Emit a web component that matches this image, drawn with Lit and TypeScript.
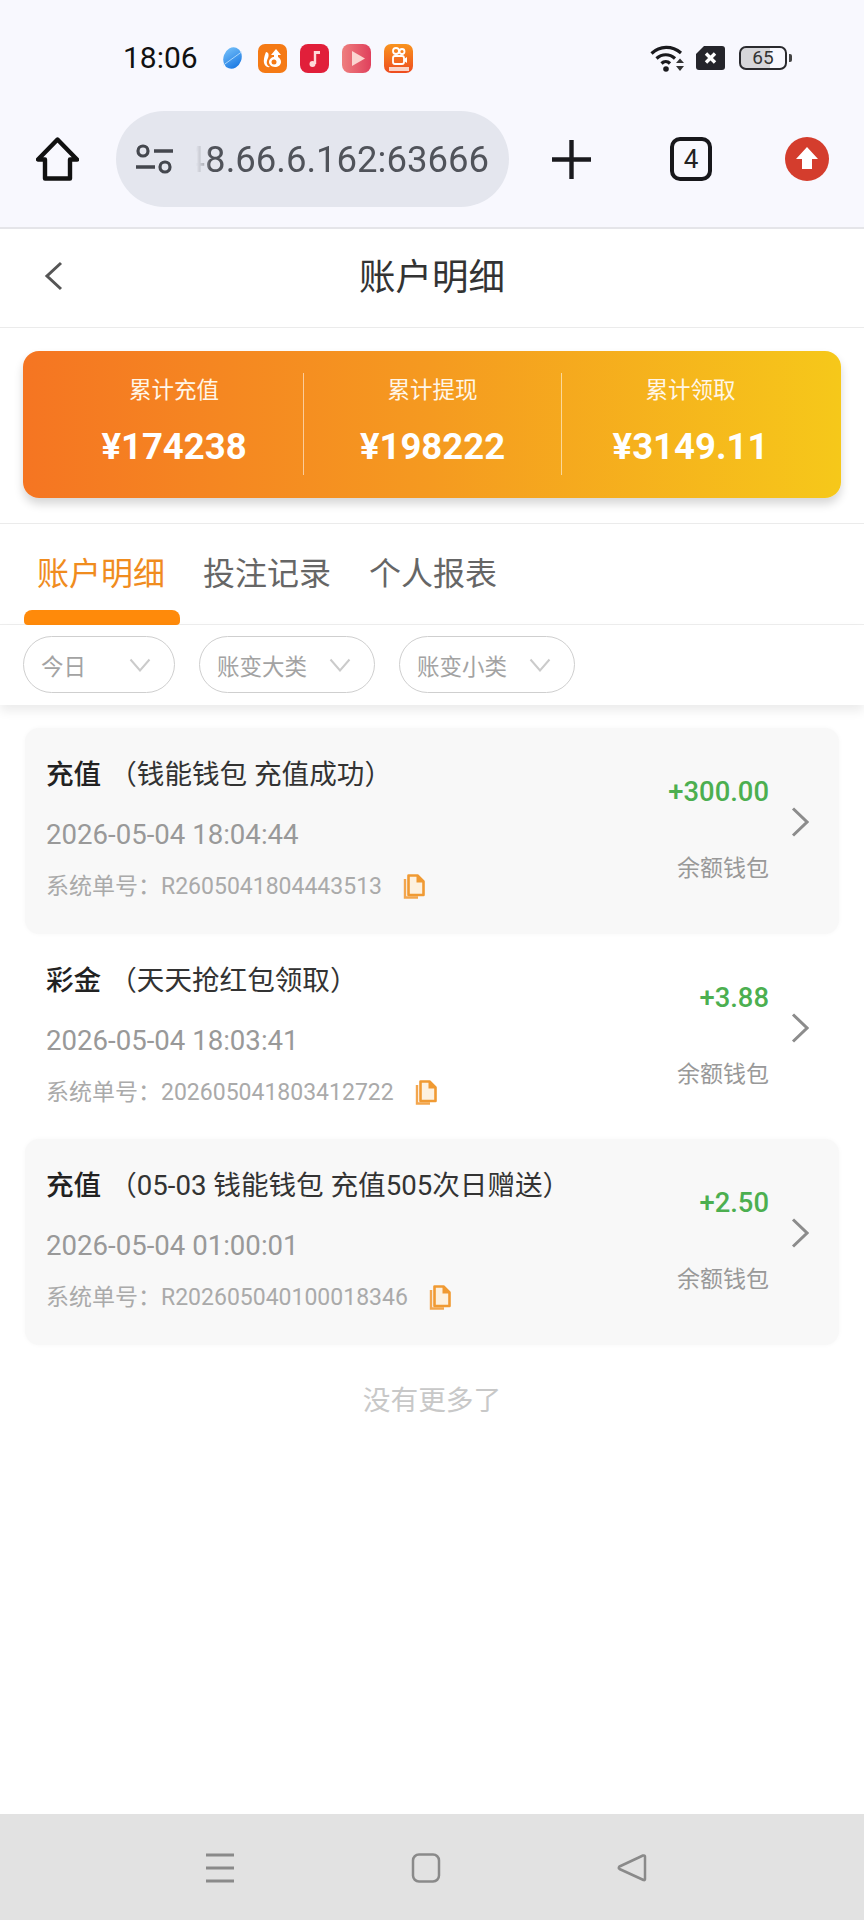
import { LitElement, html, css, svg } from "lit";
import { customElement } from "lit/decorators.js";

const rows = [
  { kind: "充值", note: "（钱能钱包 充值成功）", date: "2026-05-04 18:04:44", no: "R2605041804443513", amt: "+300.00", shaded: true },
  { kind: "彩金", note: "（天天抢红包领取）", date: "2026-05-04 18:03:41", no: "202605041803412722", amt: "+3.88", shaded: false },
  { kind: "充值", note: "（05-03 钱能钱包 充值505次日赠送）", date: "2026-05-04 01:00:01", no: "R202605040100018346", amt: "+2.50", shaded: true },
];

const copyIcon = svg`<svg class="copy" viewBox="0 0 22 26" width="22" height="26">
  <path d="M2 5v18.500h13" fill="none" stroke="#f3a64e" stroke-width="2.400"/>
  <path d="M5.500 1.500h9l6 6v13.500h-15z" fill="#fdf1e0" stroke="#f09a33" stroke-width="2.600" stroke-linejoin="round"/>
  <path d="M13.500 1.500l7 7h-7z" fill="#f09a33"/>
</svg>`;

const chevronDown = svg`<svg viewBox="0 0 22 14" width="22" height="14"><path d="M1.500 1.500L11 12.500 20.500 1.500" fill="none" stroke="#cbcbcb" stroke-width="2"/></svg>`;

@customElement("app-root")
export class AppRoot extends LitElement {
  static styles = css`
    :host { display: block; width: 864px; min-height: 1920px; background: #fff; font-family: Roboto, "Noto Sans CJK SC", sans-serif; }
    * { box-sizing: border-box; }
    .page { display: flex; flex-direction: column; height: 1920px; }
    .browser { background: #f8f8fe; height: 229px; border-bottom: 2px solid #e5e5e9; flex: none; }
    .status { height: 111px; padding: 3px 77px 0 123px; display: flex; align-items: center; }
    .time { font-size: 30px; color: #111; width: 97px; }
    .notif { display: flex; align-items: center; gap: 13px; margin-top: 2px; }
    .notif svg { display: block; }
    .sys { margin-left: auto; display: flex; align-items: center; gap: 10px; margin-top: 2px; }
    .sys svg { display: block; }
    .battery { width: 48px; height: 24px; border: 2.5px solid #2a2a2e; border-radius: 7px; position: relative; font-size: 19px; line-height: 19px; text-align: center; color: #333; background: linear-gradient(90deg, #d6d6da 65%, transparent 65%); margin-left: 4px; }
    .battery::after { content: ""; position: absolute; right: -7px; top: 6px; width: 3px; height: 8px; background: #444; border-radius: 0 2px 2px 0; }
    .toolbar { height: 96px; display: flex; align-items: center; padding-left: 36px; }
    .toolbar svg { display: block; flex: none; }
    .pill { margin-left: 37px; width: 393px; height: 96px; border-radius: 48px; background: #e4e6ee; display: flex; align-items: center; padding-left: 20px; flex: none; overflow: hidden; }
    .url { width: 293px; margin-left: 23px; font-size: 36.500px; color: #50535a; white-space: nowrap; overflow: hidden; display: flex; justify-content: flex-end; -webkit-mask-image: linear-gradient(90deg, transparent 0, rgba(0,0,0,.35) 8px, #000 14px); mask-image: linear-gradient(90deg, transparent 0, rgba(0,0,0,.35) 8px, #000 14px); }
    .url span { flex: none; }
    .plus { margin-left: 43px; }
    .tabcount { margin-left: 79px; width: 42px; height: 44px; border: 4px solid #17171b; border-radius: 10px; display: flex; align-items: center; justify-content: center; font-size: 26px; font-weight: 400; color: #222; flex: none; }
    .up { margin-left: 73px; }
    .head { height: 99px; flex: none; border-bottom: 1px solid #ebebeb; display: flex; align-items: center; justify-content: center; padding-bottom: 8px; position: relative; }
    .head h1 { margin: 0; font-size: 36.500px; font-weight: 400; color: #333; }
    .back { position: absolute; left: 44px; top: 32px; display: block; }
    .summary { height: 196px; flex: none; padding: 23px 23px 0; border-bottom: 1px solid #ebebeb; }
    .card { height: 147px; border-radius: 16px; background: linear-gradient(90deg, #f57522 0%, #f59a20 50%, #f6c81a 100%); box-shadow: 0 6px 10px rgba(0,0,0,.16); display: grid; grid-template-columns: repeat(3, 1fr); padding: 22px; color: #fff; }
    .cell { display: flex; flex-direction: column; align-items: center; border-left: 1px solid rgba(255,255,255,.55); height: 102px; }
    .cell:first-child { border-left: none; }
    .cell .l { font-size: 22.500px; line-height: 34px; color: #fff6e8; }
    .cell .v { font-size: 36.500px; font-weight: 700; line-height: 40px; margin-top: 20px; }
    .tabs { height: 101px; flex: none; display: flex; align-items: flex-start; gap: 38px; padding: 29px 0 0 37px; border-bottom: 1px solid #eee; position: relative; }
    .tab { font-size: 32px; line-height: 42px; color: #666; position: relative; }
    .tab.on { color: #f08c1e; }
    .tab.on::after { content: ""; position: absolute; left: -13px; top: 57px; width: 156px; height: 15px; background: #ff8a0a; border-radius: 8px 8px 4px 4px; }
    .filters { height: 80px; flex: none; display: flex; gap: 24px; padding: 11px 0 0 23px; background: #fff; box-shadow: 0 6px 10px rgba(0,0,0,.08); position: relative; }
    .f { height: 57px; border: 1.5px solid #cfcfcf; border-radius: 29px; display: flex; align-items: center; justify-content: space-between; padding: 0 23px 0 17px; font-size: 22.500px; color: #a3a3a3; }
    .f.a { width: 152px; }
    .f.b { width: 176px; }
    .list { padding: 23px 25px 0 25px; flex: 1; }
    .row { height: 205.500px; display: flex; align-items: flex-start; padding-left: 21px; border-radius: 14px; }
    .row.shaded { background: #f8f8f8; box-shadow: 0 0 5px #f8f8f8; }
    .left { flex: 1; padding-top: 28px; min-width: 0; }
    .t { font-size: 27.600px; line-height: 38px; color: #333; white-space: nowrap; display: flex; }
    .t b { font-weight: 500; color: #222; margin-right: 8px; }
    .d { font-size: 27.600px; line-height: 38px; color: #999; margin-top: 22px; }
    .n { font-size: 23px; line-height: 30px; color: #aaa; margin-top: 18px; display: flex; align-items: center; }
    .copy { margin-left: 21px; display: block; }
    .right { width: 200px; text-align: right; padding-top: 47px; }
    .amt { font-size: 27.400px; font-weight: 500; line-height: 34px; color: #4caf50; }
    .w { font-size: 23px; line-height: 32px; color: #999; margin-top: 44px; }
    .chev { display: block; margin: 79px 30px 0 22px; flex: none; }
    .more { text-align: center; font-size: 27.700px; line-height: 38px; color: #c8c8c8; margin-top: 37px; }
    .nav { height: 106px; flex: none; background: #e2e2e2; display: flex; align-items: flex-start; padding: 39px 0 0 205px; }
    .nav svg { display: block; }
  `;

  render() {
    return html`<div class="page">
      <div class="browser">
        <div class="status">
          <span class="time">18:06</span>
          <div class="notif">
            ${svg`<svg width="25" height="24" viewBox="0 0 24 24"><defs><linearGradient id="pl" x1="0" y1="0" x2="1" y2="1"><stop offset="0" stop-color="#7cc6fb"/><stop offset="1" stop-color="#0f6fe0"/></linearGradient></defs><ellipse cx="12" cy="12" rx="9" ry="11" fill="url(#pl)" transform="rotate(20 12 12)"/><path d="M3 19L21 6" stroke="#a9d6fb" stroke-width="1"/></svg>`}
            ${svg`<svg width="29" height="29" viewBox="0 0 29 29"><rect width="29" height="29" rx="7" fill="#f57a15"/><path d="M8 8c3 0 3 4 2 6s-3 7 2 9c-4 1-7-3-6-8 .3-2 1-5 2-7z" fill="#fff"/><path d="M18 5l5 6h-3v2c2 1 3 3 3 5 0 3-3 5-6 5-4 0-6-3-6-5 0-3 3-5 5-5v-2h-3z" fill="#fff"/><circle cx="16" cy="18" r="2.500" fill="#f57a15"/></svg>`}
            ${svg`<svg width="29" height="29" viewBox="0 0 29 29"><rect width="29" height="29" rx="8" fill="#e11f3a"/><path d="M15 7v13" stroke="#ffd9d9" stroke-width="2.400"/><circle cx="12.500" cy="20" r="3" fill="#ffd9d9"/><path d="M15 7h5v3h-5z" fill="#ffd9d9"/></svg>`}
            ${svg`<svg width="29" height="29" viewBox="0 0 29 29"><defs><linearGradient id="vd" x1="0" y1="0" x2="1" y2="0"><stop offset="0" stop-color="#ee7f7f"/><stop offset="1" stop-color="#e0405c"/></linearGradient></defs><rect width="29" height="29" rx="8" fill="url(#vd)"/><path d="M10 7l13 7.500L10 22z" fill="#fbd5d0"/></svg>`}
            ${svg`<svg width="29" height="29" viewBox="0 0 29 29"><defs><linearGradient id="ks" x1="0" y1="0" x2="0" y2="1"><stop offset="0" stop-color="#f9941e"/><stop offset="1" stop-color="#ee4b1f"/></linearGradient></defs><rect width="29" height="29" rx="7" fill="url(#ks)"/><circle cx="12" cy="7" r="3" fill="none" stroke="#fff" stroke-width="1.800"/><circle cx="18" cy="7.500" r="2.500" fill="none" stroke="#fff" stroke-width="1.800"/><rect x="9" y="12" width="11" height="8" rx="2" fill="none" stroke="#fff" stroke-width="1.800"/><path d="M20 15l3-2v6l-3-2z" fill="#fff"/><rect x="5" y="23" width="20" height="4" fill="#fff" opacity=".75"/></svg>`}
          </div>
          <div class="sys">
            ${svg`<svg width="36" height="28" viewBox="0 0 36 28"><g fill="none" stroke="#1a1a1e" stroke-width="3.200"><path d="M1.500 9.500C10 1.500 22 1.500 31 9"/><path d="M6.500 14.500c5.500-5 13-5 18.500 0"/><path d="M11.500 19.500c2.500-2.500 6-2.500 8.500 0"/></g><circle cx="16" cy="25" r="2.800" fill="#1a1a1e"/><path d="M30 14.500l4 4.500h-8zM30 27l-4-5h8z" fill="#333"/></svg>`}
            ${svg`<svg width="29" height="24" viewBox="0 0 29 24"><path d="M8 0h18a3 3 0 0 1 3 3v18a3 3 0 0 1-3 3H3a3 3 0 0 1-3-3V8z" fill="#25252b"/><path d="M10 7.500l9 9M19 7.500l-9 9" stroke="#fff" stroke-width="3.400"/></svg>`}
            <div class="battery">65</div>
          </div>
        </div>
        <div class="toolbar">
          ${svg`<svg width="43" height="44" viewBox="0 0 43 44"><path d="M21.500 2.500L2 22.500h7v19h25v-19h7z" fill="none" stroke="#111" stroke-width="4.400" stroke-linejoin="round"/></svg>`}
          <div class="pill">
            ${svg`<svg width="37" height="30" viewBox="0 0 37 30"><g fill="none" stroke="#44474e" stroke-width="3.200"><circle cx="7" cy="7" r="5"/><circle cx="29" cy="23" r="5"/></g><path d="M18 7h19M0 23h19" stroke="#44474e" stroke-width="3.600"/></svg>`}
            <div class="url"><span>48.66.6.162:63666</span></div>
          </div>
          ${svg`<svg class="plus" width="39" height="39" viewBox="0 0 39 39"><path d="M19.500 0v39M0 19.500h39" stroke="#1a1a1e" stroke-width="4.400"/></svg>`}
          <div class="tabcount">4</div>
          ${svg`<svg class="up" width="44" height="44" viewBox="0 0 44 44"><circle cx="22" cy="22" r="22" fill="#d43d2d"/><path d="M22 10L33 22h-6v10H17V22h-6z" fill="#fff"/></svg>`}
        </div>
      </div>

      <div class="head">
        ${svg`<svg class="back" width="20" height="30" viewBox="0 0 20 30"><path d="M17 2L3 15l14 13" fill="none" stroke="#555" stroke-width="3"/></svg>`}
        <h1>账户明细</h1>
      </div>

      <div class="summary">
        <div class="card">
          <div class="cell"><span class="l">累计充值</span><span class="v">¥174238</span></div>
          <div class="cell"><span class="l">累计提现</span><span class="v">¥198222</span></div>
          <div class="cell"><span class="l">累计领取</span><span class="v">¥3149.11</span></div>
        </div>
      </div>

      <div class="tabs">
        <span class="tab on">账户明细</span>
        <span class="tab">投注记录</span>
        <span class="tab">个人报表</span>
      </div>

      <div class="filters">
        <div class="f a"><span>今日</span>${chevronDown}</div>
        <div class="f b"><span>账变大类</span>${chevronDown}</div>
        <div class="f b"><span>账变小类</span>${chevronDown}</div>
      </div>

      <div class="list">
        ${rows.map(r => html`<div class="row ${r.shaded ? "shaded" : ""}">
          <div class="left">
            <div class="t"><b>${r.kind}</b><span>${r.note}</span></div>
            <div class="d">${r.date}</div>
            <div class="n"><span>系统单号：${r.no}</span>${copyIcon}</div>
          </div>
          <div class="right">
            <div class="amt">${r.amt}</div>
            <div class="w">余额钱包</div>
          </div>
          ${svg`<svg class="chev" width="18" height="30" viewBox="0 0 18 30"><path d="M2 1.500L16 15 2 28.500" fill="none" stroke="#8c8c8c" stroke-width="3"/></svg>`}
        </div>`)}
        <div class="more">没有更多了</div>
      </div>

      <div class="nav">
        ${svg`<svg width="30" height="30" viewBox="0 0 30 30"><path d="M1 2h28M1 15h28M1 28h28" stroke="#8a8a8a" stroke-width="3"/></svg>`}
        ${svg`<svg style="margin-left:176px" width="30" height="30" viewBox="0 0 30 30"><rect x="2" y="1.500" width="26" height="27" rx="6" fill="none" stroke="#8a8a8a" stroke-width="2.500"/></svg>`}
        ${svg`<svg style="margin-left:176px" width="30" height="30" viewBox="0 0 30 30"><path d="M27 2.500c.500 0 1 .500 1 1.500v22c0 1-.500 1.500-1.500 1L2.500 16c-1-.500-1-1.500 0-2.500L26 2.500z" fill="none" stroke="#8a8a8a" stroke-width="2.500" stroke-linejoin="round"/></svg>`}
      </div>
    </div>`;
  }
}
